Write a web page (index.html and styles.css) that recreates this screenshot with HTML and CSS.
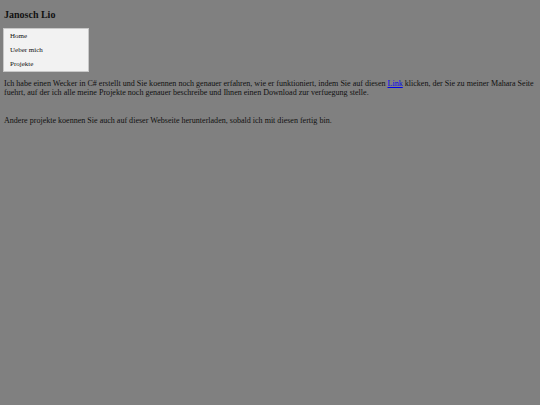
FILE: index.html
```html
<!DOCTYPE html>
<html lang="de">
<head>
<meta charset="utf-8">
<title>Janosch Lio</title>
<link rel="stylesheet" href="styles.css">
</head>
<body>
<h1 class="title">Janosch Lio</h1>
<ul class="menu">
  <li class="menu-item">Home</li>
  <li class="menu-item">Ueber mich</li>
  <li class="menu-item">Projekte</li>
</ul>
<p class="text">Ich habe einen Wecker in C# erstellt und Sie koennen noch genauer erfahren, wie er funktioniert, indem Sie auf diesen <a class="link" href="#">Link</a> klicken, der Sie zu meiner Mahara Seite fuehrt, auf der ich alle meine Projekte noch genauer beschreibe und Ihnen einen Download zur verfuegung stelle.</p>
<p class="text text-second">Andere projekte koennen Sie auch auf dieser Webseite herunterladen, sobald ich mit diesen fertig bin.</p>
</body>
</html>
```
FILE: styles.css
```css
html, body {
  background: #808080;
}
body {
  margin: 0;
  padding: 0 4px;
  font-family: "Liberation Serif", "Times New Roman", serif;
  color: #111;
}
.title {
  font-size: 10px;
  font-weight: bold;
  margin: 0;
  padding-top: 9px;
  line-height: 12px;
}
.menu {
  list-style: none;
  margin: 7px 0 0 -1px;
  padding: 0;
  width: 84px;
  background: #f2f2f2;
  border: 1px solid #c8c8c8;
}
.menu-item {
  font-size: 7px;
  line-height: 14px;
  padding-left: 6px;
}
.text {
  font-size: 8.05px;
  line-height: 9px;
  margin: 7px 0 0;
}
.text-second {
  margin-top: 19px;
}
.link {
  color: #0000ee;
}
```
